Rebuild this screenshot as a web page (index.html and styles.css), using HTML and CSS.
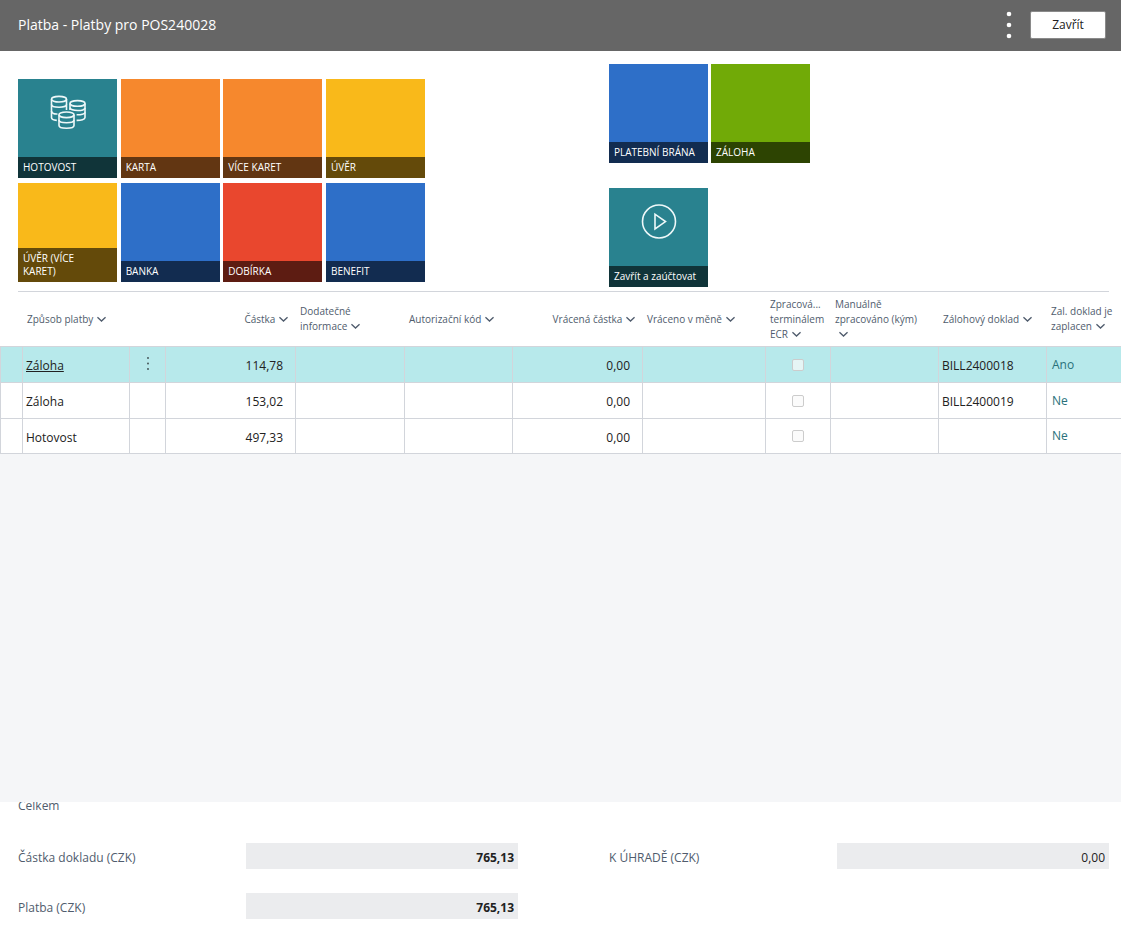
FILE: index.html
```html
<!DOCTYPE html>
<html lang="cs">
<head>
  <meta charset="UTF-8">
  <meta name="viewport" content="width=device-width, initial-scale=1.0">
  <title>Platba - Platby pro POS240028</title>
  <link rel="stylesheet" href="styles.css">
</head>
<body>

  <!-- Symbol šipky u záhlaví sloupců -->
  <svg class="symbols" aria-hidden="true">
    <symbol id="chevron" viewBox="0 0 8 8">
      <path d="M0.4 2 L4 5.4 L7.6 2" fill="none" stroke="currentColor" stroke-width="1.2"/>
    </symbol>
  </svg>

  <!-- Horní lišta -->
  <header class="topbar">
    <h1>Platba - Platby pro POS240028</h1>
    <button class="more" aria-label="Další možnosti">
      <svg width="6" height="28" viewBox="0 0 6 28" fill="#fff">
        <circle cx="3" cy="3" r="2.3"/>
        <circle cx="3" cy="14" r="2.3"/>
        <circle cx="3" cy="25" r="2.3"/>
      </svg>
    </button>
    <button class="close">Zavřít</button>
  </header>

  <!-- Dlaždice -->
  <section class="tiles">
    <div class="methods">
      <button class="tile teal">
        <svg class="icon" viewBox="0 0 36 36">
          <ellipse cx="9" cy="4.2" rx="7.5" ry="2.8"/>
          <path d="M1.5 4.2 V22.5 C1.5 24.2 3.6 25.2 6.8 25.4"/>
          <path d="M16.5 4.2 V15"/>
          <path d="M1.5 9.5 C1.5 13.2 16.5 13.2 16.5 9.5"/>
          <path d="M1.5 16 C1.5 18.4 4.5 19.3 7.5 19"/>
          <ellipse cx="27.5" cy="8.4" rx="7.5" ry="2.8"/>
          <path d="M20 8.4 V15"/>
          <path d="M35 8.4 V22.5 C35 24.4 31 25.5 26.6 25.4"/>
          <path d="M20 12.8 C21 16.3 35 16.5 35 13"/>
          <path d="M26.6 19.8 C31 19.9 35 19 35 17.2"/>
          <ellipse cx="16.5" cy="19.8" rx="7.5" ry="2.8"/>
          <path d="M9 19.8 V30.4 C9 34.1 24 34.1 24 30.4 V19.8"/>
          <path d="M9 25 C9 28.7 24 28.7 24 25"/>
        </svg>
        <span class="caption">HOTOVOST</span>
      </button>
      <button class="tile orange"><span class="caption">KARTA</span></button>
      <button class="tile orange"><span class="caption">VÍCE KARET</span></button>
      <button class="tile yellow"><span class="caption">ÚVĚR</span></button>
      <button class="tile yellow"><span class="caption">ÚVĚR (VÍCE<br>KARET)</span></button>
      <button class="tile blue"><span class="caption">BANKA</span></button>
      <button class="tile red"><span class="caption">DOBÍRKA</span></button>
      <button class="tile blue"><span class="caption">BENEFIT</span></button>
    </div>
    <div class="actions">
      <button class="tile blue"><span class="caption">PLATEBNÍ BRÁNA</span></button>
      <button class="tile green"><span class="caption">ZÁLOHA</span></button>
      <button class="tile teal">
        <svg class="icon" viewBox="0 0 36 36">
          <circle cx="18" cy="17.5" r="16.5"/>
          <path d="M14 10.2 V25 L24.5 17.6 Z"/>
        </svg>
        <span class="caption">Zavřít a zaúčtovat</span>
      </button>
    </div>
  </section>

  <!-- Seznam plateb -->
  <main class="list">
    <table>
      <colgroup>
        <col class="c-mark"><col class="c-method"><col class="c-menu"><col class="c-amount">
        <col class="c-info"><col class="c-code"><col class="c-amount"><col class="c-currency">
        <col class="c-ecr"><col class="c-doc"><col class="c-doc"><col>
      </colgroup>
      <thead>
        <tr>
          <th></th>
          <th><button>Způsob platby <svg><use href="#chevron"/></svg></button></th>
          <th></th>
          <th class="num"><button>Částka <svg><use href="#chevron"/></svg></button></th>
          <th><button>Dodatečné<br>informace <svg><use href="#chevron"/></svg></button></th>
          <th><button>Autorizační kód <svg><use href="#chevron"/></svg></button></th>
          <th class="num"><button>Vrácená částka <svg><use href="#chevron"/></svg></button></th>
          <th><button>Vráceno v měně <svg><use href="#chevron"/></svg></button></th>
          <th><button>Zpracová...<br>terminálem<br>ECR <svg><use href="#chevron"/></svg></button></th>
          <th><button>Manuálně<br>zpracováno (kým)<br>&nbsp;<svg><use href="#chevron"/></svg></button></th>
          <th><button>Zálohový doklad <svg><use href="#chevron"/></svg></button></th>
          <th><button>Zal. doklad je<br>zaplacen <svg><use href="#chevron"/></svg></button></th>
        </tr>
      </thead>
      <tbody>
        <tr class="selected">
          <td></td>
          <td><a href="#">Záloha</a></td>
          <td class="menu">
            <button aria-label="Nabídka řádku">
              <svg width="4" height="14" viewBox="0 0 4 14" fill="#3c4a4c">
                <circle cx="2" cy="2" r="0.9"/><circle cx="2" cy="7.5" r="0.9"/><circle cx="2" cy="13" r="0.9"/>
              </svg>
            </button>
          </td>
          <td class="num">114,78</td>
          <td></td>
          <td></td>
          <td class="num">0,00</td>
          <td></td>
          <td class="check"><input type="checkbox" aria-label="Zpracováno terminálem ECR" disabled></td>
          <td></td>
          <td>BILL2400018</td>
          <td class="paid"><a href="#">Ano</a></td>
        </tr>
        <tr>
          <td></td>
          <td>Záloha</td>
          <td></td>
          <td class="num">153,02</td>
          <td></td>
          <td></td>
          <td class="num">0,00</td>
          <td></td>
          <td class="check"><input type="checkbox" aria-label="Zpracováno terminálem ECR" disabled></td>
          <td></td>
          <td>BILL2400019</td>
          <td class="paid"><a href="#">Ne</a></td>
        </tr>
        <tr>
          <td></td>
          <td>Hotovost</td>
          <td></td>
          <td class="num">497,33</td>
          <td></td>
          <td></td>
          <td class="num">0,00</td>
          <td></td>
          <td class="check"><input type="checkbox" aria-label="Zpracováno terminálem ECR" disabled></td>
          <td></td>
          <td></td>
          <td class="paid"><a href="#">Ne</a></td>
        </tr>
      </tbody>
    </table>
  </main>

  <!-- Součty -->
  <section class="totals">
    <h2>Celkem</h2>
    <div class="fields">
      <div class="field">
        <label for="castka">Částka dokladu (CZK)</label>
        <input class="strong" id="castka" type="text" value="765,13" readonly>
      </div>
      <div class="field">
        <label for="kUhrade">K ÚHRADĚ (CZK)</label>
        <input id="kUhrade" type="text" value="0,00" readonly>
      </div>
      <div class="field">
        <label for="platba">Platba (CZK)</label>
        <input class="strong" id="platba" type="text" value="765,13" readonly>
      </div>
    </div>
  </section>

</body>
</html>
```

FILE: styles.css
```css
* {
  box-sizing: border-box;
}

body {
  margin: 0;
  min-height: 100vh;
  display: flex;
  flex-direction: column;
  font-family: "Segoe UI", "Open Sans", "Noto Sans", sans-serif;
  font-size: 12px;
  line-height: 16px;
  color: #212121;
  background: #fff;
}

button,
input {
  font: inherit;
  color: inherit;
}

button {
  padding: 0;
  border: none;
  background: none;
  cursor: pointer;
}

.symbols {
  display: none;
}

/* Horní lišta */
.topbar {
  display: flex;
  align-items: center;
  gap: 18px;
  height: 51px;
  padding: 0 15px 2px 18px;
  background: #666;
  color: #fff;
}

.topbar h1 {
  flex: 1;
  margin: 0;
  font-size: 14px;
  font-weight: 400;
}

.more svg {
  display: block;
}

.close {
  width: 76px;
  height: 28px;
  border: 1px solid #8a8a8a;
  border-radius: 2px;
  background: #fff;
  color: #212121;
}

/* Dlaždice */
.tiles {
  display: grid;
  grid-template-columns: 1fr 1fr;
  column-gap: 91px;
  margin: 0 12px 0 18px;
  padding: 13px 0 4px;
  border-bottom: 1px solid #d2d5db;
}

.methods {
  display: grid;
  grid-template-columns: repeat(4, 99px);
  justify-content: space-between;
  align-content: start;
  row-gap: 5px;
  width: 407px;
  padding-top: 15px;
}

.actions {
  display: grid;
  grid-template-columns: repeat(2, 99px);
  align-content: start;
  gap: 25px 3px;
}

.tile {
  display: flex;
  flex-direction: column;
  justify-content: flex-end;
  height: 99px;
  color: #fff;
  font-size: 10px;
  line-height: 13px;
  text-align: left;
}

.caption {
  padding: 4px 5px;
  background: rgba(0, 0, 0, 0.6);
}

.icon {
  width: 36px;
  height: 36px;
  margin: 16px auto auto;
  fill: none;
  stroke: #eef8f9;
  stroke-width: 1.6;
}

.teal { background: #29828f; }
.orange { background: #f6882d; }
.yellow { background: #f9b91a; }
.blue { background: #2e6fc8; }
.red { background: #e9472e; }
.green { background: #71aa07; }

/* Seznam plateb */
.list {
  flex: 1;
  background: #f5f6f8;
}

table {
  width: 100%;
  table-layout: fixed;
  border-collapse: separate;
  border-spacing: 0;
  background: #fff;
}

.c-mark { width: 22px; }
.c-method { width: 107px; }
.c-menu { width: 36px; }
.c-amount { width: 130px; }
.c-info { width: 109px; }
.c-code { width: 108px; }
.c-currency { width: 123px; }
.c-ecr { width: 65px; }
.c-doc { width: 108px; }

th {
  height: 54px;
  padding: 0 0 0 5px;
  text-align: left;
  color: #505c6d;
  font-size: 10px;
  font-weight: 400;
  line-height: 15px;
  white-space: nowrap;
}

th button {
  text-align: left;
}

th svg {
  width: 9px;
  height: 9px;
  margin-left: 1px;
  vertical-align: -1px;
}

th.num {
  padding-right: 7px;
  text-align: right;
}

td {
  height: 36px;
  padding: 3px 0 0 3px;
  border-top: 1px solid #d2d5db;
  border-left: 1px solid #d2d5db;
}

td.num {
  padding-right: 12px;
  text-align: right;
}

td.menu,
td.check {
  padding: 0;
  text-align: center;
}

td a {
  color: inherit;
}

td.paid {
  padding: 0 0 0 5px;
}

.paid a {
  color: #29717a;
  text-decoration: none;
}

tbody tr:last-child td {
  border-bottom: 1px solid #d2d5db;
}

.selected td {
  background: #b7e9eb;
}

td.menu svg,
td.check input {
  display: block;
  margin: 0 auto;
}

td.check input {
  appearance: none;
  width: 12px;
  height: 12px;
  border: 1px solid #ccc;
  border-radius: 2px;
  background: rgba(250, 250, 250, 0.7);
}

/* Součty */
.totals {
  overflow: hidden;
  padding: 0 12px 9px 18px;
  color: #505c6d;
}

/* Nadpis je zčásti odrolovaný pod seznam */
.totals h2 {
  margin: -4px 0 29px;
  font-size: 12px;
  font-weight: 500;
}

.fields {
  display: grid;
  grid-template-columns: 1fr 1fr;
  gap: 24px 91px;
}

.field {
  display: flex;
  align-items: center;
}

.field label {
  width: 228px;
  padding-top: 3px;
}

.field input {
  flex: 1;
  min-width: 0;
  height: 26px;
  padding: 2px 4px 0;
  border: none;
  background: #ebecee;
  color: #212121;
  text-align: right;
}

.field .strong {
  font-weight: 700;
}
```
